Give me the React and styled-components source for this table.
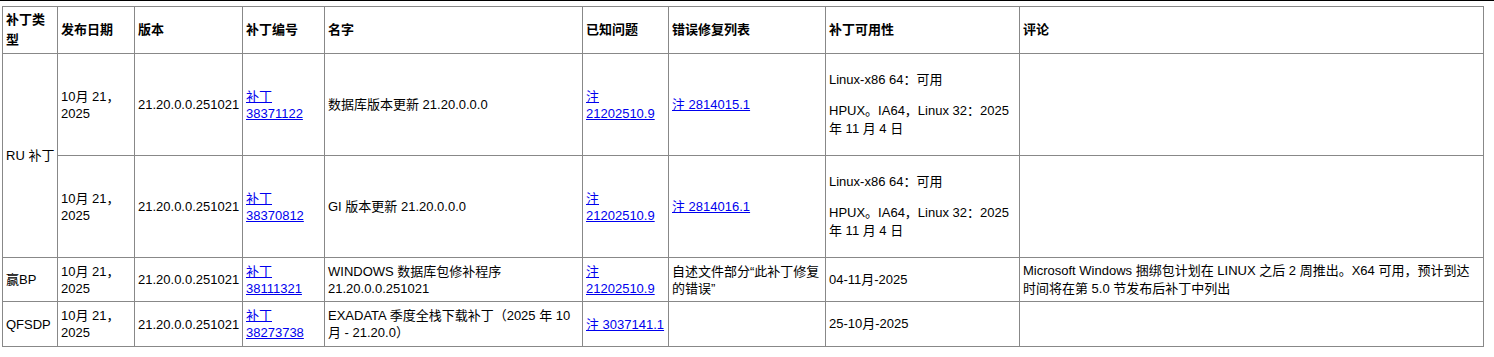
import React from 'react'
import styled, { createGlobalStyle } from 'styled-components'

const GlobalStyle = createGlobalStyle`
  body {
    margin: 0;
    background: #fff;
    color: #000;
    font-family: "Liberation Sans", "Noto Sans CJK SC", sans-serif;
    font-size: 13px;
  }
`

const Page = styled.div`
  border-top: 1px solid #000;
  padding: 5px 0 0 2px;
`

const Table = styled.table`
  border-collapse: collapse;
  table-layout: fixed;
  width: 1481px;
  border: 1px solid #888;
  line-height: 17px;
`

const Row = styled.tr`
  height: ${p => p.$h}px;
`

const Th = styled.th`
  border: 1px solid #888;
  padding: 3px;
  text-align: left;
  vertical-align: middle;
  font-weight: bold;
  line-height: 20px;
`

const Td = styled.td`
  border: 1px solid #888;
  padding: 3px;
  vertical-align: middle;
  line-height: ${p => (p.$loose ? '18px' : '17px')};
  white-space: ${p => (p.$nowrap ? 'nowrap' : 'normal')};
`

const Para = styled.p`
  margin: 13px 0;
`

const Link = styled.a`
  color: #0000ee;
  text-decoration: underline;
`

const cols = [55, 77, 108, 82, 258, 86, 157, 194, 464]
const headers = ['补丁类型', '发布日期', '版本', '补丁编号', '名字', '已知问题', '错误修复列表', '补丁可用性', '评论']

const Availability = () => (
  <>
    <Para>Linux-x86 64：可用</Para>
    <Para>HPUX。IA64，Linux 32：2025 年 11 月 4 日</Para>
  </>
)

const App = () => {
  return (
    <Page>
      <GlobalStyle />
      <Table>
        <colgroup>
          {cols.map((w, i) => <col key={i} style={{ width: w }} />)}
        </colgroup>
        <thead>
          <Row $h={44}>
            {headers.map(h => <Th key={h}>{h}</Th>)}
          </Row>
        </thead>
        <tbody>
          <Row $h={102}>
            <Td rowSpan={2} $nowrap>RU 补丁</Td>
            <Td>10月 21，2025</Td>
            <Td>21.20.0.0.251021</Td>
            <Td><Link href="#">补丁 38371122</Link></Td>
            <Td>数据库版本更新 21.20.0.0.0</Td>
            <Td><Link href="#">注 21202510.9</Link></Td>
            <Td><Link href="#">注 2814015.1</Link></Td>
            <Td $loose><Availability /></Td>
            <Td></Td>
          </Row>
          <Row $h={102}>
            <Td>10月 21，2025</Td>
            <Td>21.20.0.0.251021</Td>
            <Td><Link href="#">补丁 38370812</Link></Td>
            <Td>GI 版本更新 21.20.0.0.0</Td>
            <Td><Link href="#">注 21202510.9</Link></Td>
            <Td><Link href="#">注 2814016.1</Link></Td>
            <Td $loose><Availability /></Td>
            <Td></Td>
          </Row>
          <Row $h={44}>
            <Td>赢BP</Td>
            <Td>10月 21，2025</Td>
            <Td>21.20.0.0.251021</Td>
            <Td><Link href="#">补丁 38111321</Link></Td>
            <Td>WINDOWS 数据库包修补程序 21.20.0.0.251021</Td>
            <Td><Link href="#">注 21202510.9</Link></Td>
            <Td>自述文件部分“此补丁修复的错误”</Td>
            <Td $loose>04-11月-2025</Td>
            <Td $loose>Microsoft Windows 捆绑包计划在 LINUX 之后 2 周推出。X64 可用，预计到达时间将在第 5.0 节发布后补丁中列出</Td>
          </Row>
          <Row $h={45}>
            <Td>QFSDP</Td>
            <Td>10月 21，2025</Td>
            <Td>21.20.0.0.251021</Td>
            <Td><Link href="#">补丁 38273738</Link></Td>
            <Td>EXADATA 季度全栈下载补丁（2025 年 10 月 - 21.20.0）</Td>
            <Td><Link href="#">注 3037141.1</Link></Td>
            <Td></Td>
            <Td $loose>25-10月-2025</Td>
            <Td></Td>
          </Row>
        </tbody>
      </Table>
    </Page>
  )
}

export default App
